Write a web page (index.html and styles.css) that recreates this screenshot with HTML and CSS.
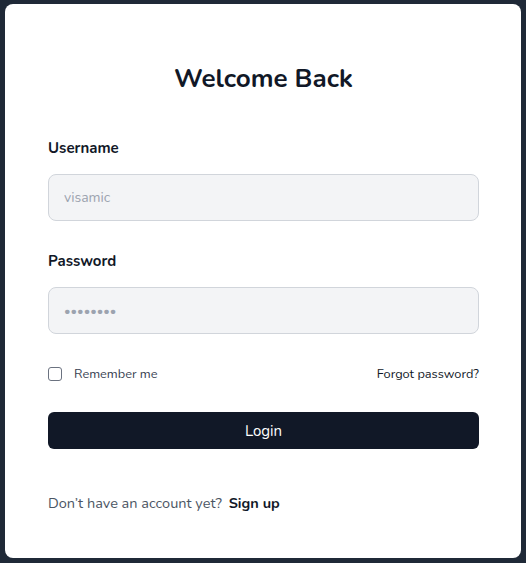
FILE: index.html
```html
<!DOCTYPE html>
<html lang="en">
<head>
<meta charset="utf-8">
<title>Login</title>
<link rel="stylesheet" href="styles.css">
</head>
<body>
<main class="card">
  <h1 class="title">Welcome Back</h1>
  <form class="form">
    <label class="label" for="username">Username</label>
    <input class="input" id="username" type="text" placeholder="visamic">
    <label class="label label-gap" for="password">Password</label>
    <input class="input input-password" id="password" type="password" placeholder="••••••••">
    <div class="options">
      <label class="remember"><span class="checkbox"></span>Remember me</label>
      <a class="forgot" href="#">Forgot password?</a>
    </div>
    <button class="button" type="button">Login</button>
  </form>
  <p class="footer">Don’t have an account yet? <a class="signup" href="#">Sign up</a></p>
</main>
</body>
</html>
```
FILE: styles.css
```css
* { box-sizing: border-box; }
html, body { margin: 0; height: 100%; }
body {
  background: #1f2937;
  padding: 4px 5px 5px;
  font-family: "Nunito", "Lato", "Noto Sans", sans-serif;
  color: #111827;
}
.card {
  background: #ffffff;
  border-radius: 8px;
  height: 554px;
  padding: 59px 42px 0 43px;
}
.title {
  margin: 0;
  text-align: center;
  font-size: 26px;
  line-height: 32px;
  font-weight: 700;
  color: #111827;
}
.form {
  display: flex;
  flex-direction: column;
  margin-top: 43px;
}
.label {
  font-size: 15px;
  line-height: 20px;
  font-weight: 700;
  color: #111827;
  margin-bottom: 16px;
}
.label-gap { margin-top: 30px; }
.input {
  height: 47px;
  width: 100%;
  background: #f3f4f6;
  border: 1px solid #d1d5db;
  border-radius: 8px;
  padding: 0 15px;
  font-family: inherit;
  font-size: 14px;
  color: #111827;
  outline: none;
}
.input-password { font-size: 12.5px; }
.input::placeholder { color: #9ca3af; }
.options {
  display: flex;
  justify-content: space-between;
  align-items: center;
  height: 20px;
  margin-top: 30px;
  font-size: 12.75px;
}
.remember {
  display: flex;
  align-items: center;
  gap: 12px;
  color: #374151;
}
.checkbox {
  width: 14px;
  height: 14px;
  border: 1px solid #6b7280;
  border-radius: 3px;
  background: #fff;
}
.forgot {
  color: #111827;
  text-decoration: none;
}
.button {
  margin-top: 28px;
  height: 37px;
  width: 100%;
  background: #111827;
  color: #ffffff;
  border: none;
  border-radius: 6px;
  font-family: inherit;
  font-size: 15px;
}
.footer {
  margin: 44px 0 0;
  font-size: 14.5px;
  line-height: 20px;
  color: #4b5563;
}
.signup {
  margin-left: 3px;
  font-weight: 700;
  color: #111827;
  text-decoration: none;
}
```
